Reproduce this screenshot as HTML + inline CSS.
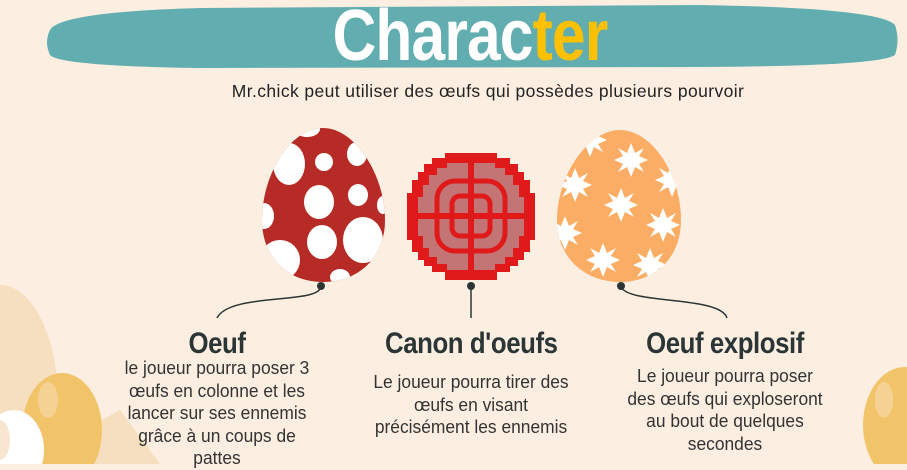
<!DOCTYPE html>
<html><head><meta charset="utf-8"><style>
html,body{margin:0;padding:0}
body{width:907px;height:464px;overflow:hidden;background:#fcefe2;position:relative;font-family:"Liberation Sans","DejaVu Sans",sans-serif}
.t{position:absolute;text-align:center;color:#2b3535;white-space:nowrap}
.h{font-weight:bold;font-size:30px;transform:scaleX(0.86);letter-spacing:-0.5px}
.b{font-size:18.5px;line-height:22.5px;color:#333;transform:scaleX(0.94)}
</style></head><body>
<svg width="907" height="464" style="position:absolute;left:0;top:0">
<ellipse cx="0" cy="400" rx="58" ry="115" fill="#f6dfbf"/>
<path d="M20 464 L120 410 L160 464Z" fill="#f6dfbf"/>
<ellipse cx="62" cy="430" rx="40" ry="57" fill="#f2c46a"/>
<ellipse cx="48" cy="400" rx="10" ry="18" fill="#f5d293"/>
<ellipse cx="14" cy="450" rx="30" ry="40" fill="#fff"/>
<ellipse cx="0" cy="440" rx="10" ry="20" fill="#f8e6d0"/>
<ellipse cx="905" cy="425" rx="42" ry="58" fill="#f2c46a"/>
<ellipse cx="884" cy="400" rx="9" ry="18" fill="#f5d293"/>
<path d="M50 30 Q60 12 200 8 L700 5 Q880 8 895 25 Q900 40 895 55 Q880 66 700 67 L200 68 Q60 66 50 55 Q44 42 50 30Z" fill="#62adaf"/>
<defs>
<clipPath id="e1"><path d="M323 128 C355 128 385 175 385 220 C385 258 358 282 323 282 C288 282 262 258 262 220 C262 175 290 128 323 128Z"/></clipPath>
<clipPath id="e3"><path d="M620 130 C652 130 681 175 681 220 C681 258 655 282 620 282 C585 282 557 258 557 220 C557 175 588 130 620 130Z"/></clipPath>
<polygon id="st" points="0,-17 4,-7 13,-12 8,-4 17,0 8,4 13,12 4,7 0,17 -4,7 -13,12 -8,4 -17,0 -8,-4 -13,-12 -4,-7"/>
</defs>
<g clip-path="url(#e1)">
<rect x="260" y="125" width="130" height="160" fill="#b72b26"/>
<g fill="#fff">
<ellipse cx="307" cy="129" rx="13" ry="8"/><ellipse cx="289" cy="164" rx="16" ry="21"/>
<ellipse cx="324" cy="162" rx="9" ry="9"/><ellipse cx="357" cy="154" rx="10" ry="12"/>
<ellipse cx="319" cy="202" rx="15" ry="17"/><ellipse cx="358" cy="195" rx="10" ry="11"/>
<ellipse cx="383" cy="205" rx="6" ry="9"/><ellipse cx="264" cy="216" rx="10" ry="13"/>
<ellipse cx="322" cy="242" rx="15" ry="17"/><ellipse cx="363" cy="240" rx="20" ry="23"/>
<ellipse cx="280" cy="260" rx="20" ry="20"/><ellipse cx="340" cy="277" rx="10" ry="8"/>
</g></g>
<g clip-path="url(#e3)">
<rect x="555" y="125" width="130" height="160" fill="#fbad65"/>
<g fill="#fff">
<use href="#st" x="631" y="160"/><use href="#st" x="590" y="140"/><use href="#st" x="575" y="185"/>
<use href="#st" x="621" y="205"/><use href="#st" x="672" y="180"/><use href="#st" x="663" y="225"/>
<use href="#st" x="565" y="233"/><use href="#st" x="603" y="260"/><use href="#st" x="650" y="265"/>
</g></g>
<path d="M445 153 H497 V158 H510 V164 H518 V172 H524 V180 H530 V193 H535 V240 H530 V252 H524 V260 H518 V266 H510 V272 H497 V280 H445 V272 H432 V266 H424 V260 H418 V252 H412 V240 H407 V193 H412 V180 H418 V172 H424 V164 H432 V158 H445Z" fill="#e0191b"/>
<path d="M447 163 H495 V168 H505 V175 H513 V185 H519 V197 H524 V236 H519 V248 H513 V257 H505 V264 H495 V270 H447 V264 H437 V257 H429 V248 H423 V236 H418 V197 H423 V185 H429 V175 H437 V168 H447Z" fill="#c37575"/>
<rect x="437" y="181" width="68" height="70" fill="none" stroke="#e0191b" stroke-width="5" rx="18"/>
<rect x="452" y="196" width="38" height="40" fill="none" stroke="#e0191b" stroke-width="5" rx="8"/>
<rect x="468" y="163" width="6" height="107" fill="#e0191b"/>
<rect x="418" y="213" width="106" height="6" fill="#e0191b"/>
<g stroke="#2b3535" stroke-width="1.5" fill="none">
<path d="M321 286 C321 305 230 292 217 318"/>
<path d="M471 286 V318"/>
<path d="M621 286 C625 305 720 295 727 318"/>
</g>
<g fill="#2b3535"><circle cx="321" cy="286" r="4"/><circle cx="471" cy="286" r="4"/><circle cx="621" cy="286" r="4"/></g>
</svg>
<div class="t" style="left:220px;width:500px;top:-5px;font-size:72px;font-weight:bold;color:#fff;transform:scaleX(0.84);letter-spacing:-1px">Charac<span style="color:#ffc000">ter</span></div>
<div class="t" style="left:188px;width:600px;top:81px;font-size:17.5px;color:#222;letter-spacing:0.4px">Mr.chick peut utiliser des œufs qui possèdes plusieurs pourvoir</div>
<div class="t h" style="left:117px;width:200px;top:327px">Oeuf</div>
<div class="t h" style="left:371px;width:200px;top:327px">Canon d'oeufs</div>
<div class="t h" style="left:625px;width:200px;top:327px">Oeuf explosif</div>
<div class="t b" style="left:97px;width:240px;top:357px">le joueur pourra poser 3<br>œufs en colonne et les<br>lancer sur ses ennemis<br>grâce à un coups de<br>pattes</div>
<div class="t b" style="left:351px;width:240px;top:371px">Le joueur pourra tirer des<br>œufs en visant<br>précisément les ennemis</div>
<div class="t b" style="left:605px;width:240px;top:365px">Le joueur pourra poser<br>des œufs qui exploseront<br>au bout de quelques<br>secondes</div>
</body></html>
